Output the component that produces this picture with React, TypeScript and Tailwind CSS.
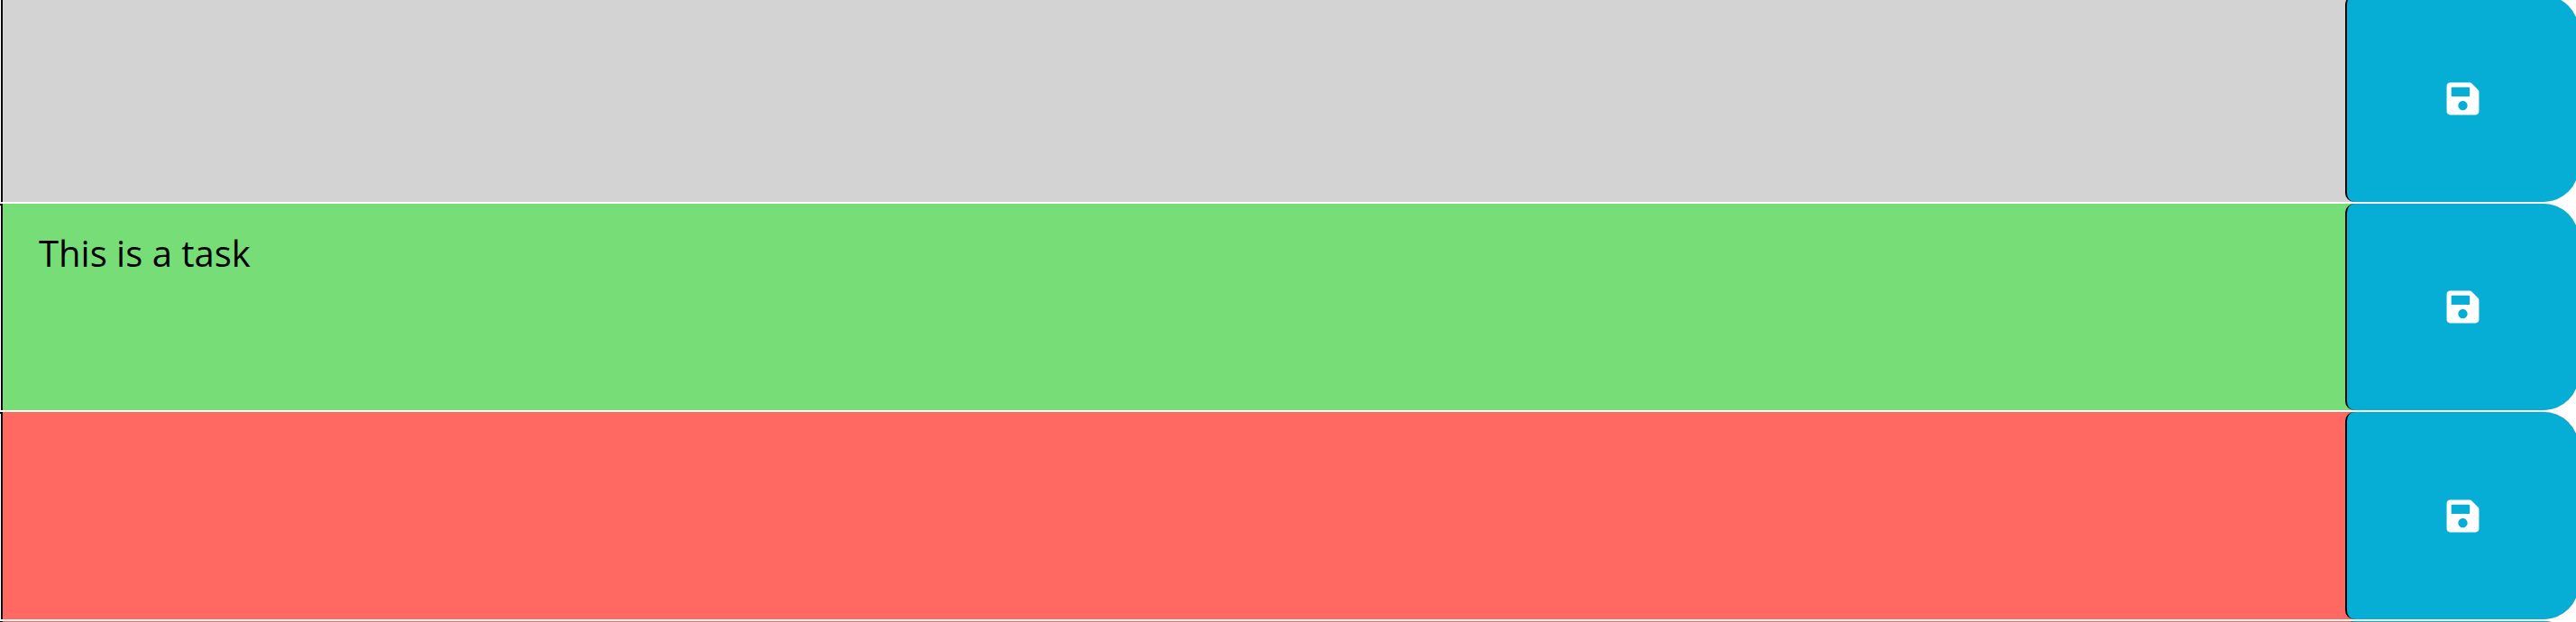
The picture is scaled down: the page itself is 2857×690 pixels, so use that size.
import { useState } from "react";
import { FaSave } from "react-icons/fa";

type Block = { hour: string; task: string; tone: string };

const blocks: Block[] = [
  { hour: "first hour", task: "", tone: "bg-[#d3d3d3]" },
  { hour: "second hour", task: "This is a task", tone: "bg-[#77dd77]" },
  { hour: "third hour", task: "", tone: "bg-[#ff6961]" },
  { hour: "fourth hour", task: "", tone: "bg-[#ff6961]" },
];

function TimeBlock({ hour, task, tone }: Block) {
  const [text, setText] = useState(task);

  return (
    <div className="flex border-t-2 border-white">
      <div className="w-px shrink-0 border-t-2 border-black" />
      <div className={`flex min-w-0 flex-1 rounded-r-[39px] ${tone}`}>
        <textarea
          aria-label={`Task for the ${hour}`}
          value={text}
          onChange={(event) => setText(event.target.value)}
          className="block min-w-0 flex-1 resize-none overflow-hidden border-l-2 border-black bg-transparent px-10 py-6 text-[40px] leading-[62px] text-black outline-none"
        />
        <button
          type="button"
          aria-label={`Save the ${hour}`}
          className="flex w-[259px] shrink-0 items-center justify-center rounded-l-[10px] rounded-r-[39px] border-l-2 border-black bg-[#06aed5] text-[41px] text-white"
        >
          <FaSave aria-hidden="true" />
        </button>
      </div>
    </div>
  );
}

export default function App() {
  return (
    <main className="h-screen overflow-hidden bg-white font-['Open_Sans',sans-serif]">
      <div className="-mt-[7px] -mr-[3px] grid grid-rows-[231px_231px_232px_232px]">
        {blocks.map((block) => (
          <TimeBlock key={block.hour} {...block} />
        ))}
      </div>
    </main>
  );
}
